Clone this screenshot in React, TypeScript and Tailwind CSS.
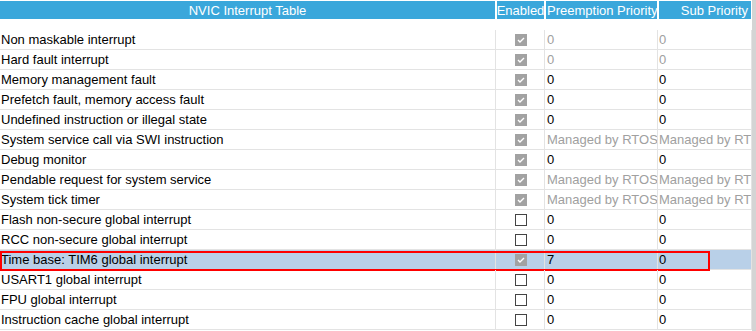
type Row = {
  name: string;
  enabled: boolean;
  pre: string;
  sub: string;
  dim?: boolean;
  selected?: boolean;
};

const rows: Row[] = [
  { name: "Non maskable interrupt", enabled: true, pre: "0", sub: "0", dim: true },
  { name: "Hard fault interrupt", enabled: true, pre: "0", sub: "0", dim: true },
  { name: "Memory management fault", enabled: true, pre: "0", sub: "0" },
  { name: "Prefetch fault, memory access fault", enabled: true, pre: "0", sub: "0" },
  { name: "Undefined instruction or illegal state", enabled: true, pre: "0", sub: "0" },
  { name: "System service call via SWI instruction", enabled: true, pre: "Managed by RTOS", sub: "Managed by RTOS", dim: true },
  { name: "Debug monitor", enabled: true, pre: "0", sub: "0" },
  { name: "Pendable request for system service", enabled: true, pre: "Managed by RTOS", sub: "Managed by RTOS", dim: true },
  { name: "System tick timer", enabled: true, pre: "Managed by RTOS", sub: "Managed by RTOS", dim: true },
  { name: "Flash non-secure global interrupt", enabled: false, pre: "0", sub: "0" },
  { name: "RCC non-secure global interrupt", enabled: false, pre: "0", sub: "0" },
  { name: "Time base: TIM6 global interrupt", enabled: true, pre: "7", sub: "0", selected: true },
  { name: "USART1 global interrupt", enabled: false, pre: "0", sub: "0" },
  { name: "FPU global interrupt", enabled: false, pre: "0", sub: "0" },
  { name: "Instruction cache global interrupt", enabled: false, pre: "0", sub: "0" },
];

function Check({ on }: { on: boolean }) {
  if (!on) {
    return <div className="h-[12px] w-[12px] border border-[#444] bg-white" />;
  }
  return (
    <div className="flex h-[12px] w-[12px] items-center justify-center bg-[#a2a2a2]">
      <svg width="10" height="10" viewBox="0 0 10 10">
        <polyline points="2,5 4,7 8,3" fill="none" stroke="#fff" strokeWidth="1.4" />
      </svg>
    </div>
  );
}

export default function App() {
  return (
    <div className="flex h-[331px] w-[756px] bg-white font-['Liberation_Sans',Arial,sans-serif] text-[13px] leading-none text-black">
      <div className="w-[752px]">
        {/* header */}
        <div className="flex h-[19px] pt-[1px] whitespace-nowrap text-white">
          <div className="w-[496px] pr-[1px]">
            <div className="flex h-full items-center justify-center bg-[#3aa7db]">NVIC Interrupt Table</div>
          </div>
          <div className="w-[49px] px-[1px]">
            <div className="flex h-full items-center justify-center bg-[#3aa7db]">Enabled</div>
          </div>
          <div className="w-[113px] px-[1px]">
            <div className="flex h-full items-center overflow-hidden bg-[#3aa7db] pl-[1px]">Preemption Priority</div>
          </div>
          <div className="w-[94px] px-[1px]">
            <div className="flex h-full items-center justify-end bg-[#3aa7db] pr-[3px]">Sub Priority</div>
          </div>
        </div>
        <div className="h-[11px]" />
        {rows.map((r) => (
          <div
            key={r.name}
            className={`relative flex h-[20px] border-b border-[#e3e3e3] ${r.selected ? "bg-[#b9d0e8]" : ""}`}
          >
            <div className="flex w-[496px] items-center border-r border-[#e3e3e3] pl-[1px]">{r.name}</div>
            <div className="flex w-[49px] items-center justify-center border-r border-[#e3e3e3] pl-[1px]">
              <Check on={r.enabled} />
            </div>
            <div
              className={`flex w-[113px] items-center overflow-hidden whitespace-nowrap border-r border-[#e3e3e3] pl-[2px] ${r.dim ? "text-[#a0a0a0]" : ""}`}
            >
              {r.pre}
            </div>
            <div
              className={`flex w-[94px] items-center overflow-hidden whitespace-nowrap border-r border-[#e3e3e3] pl-[1px] ${r.dim ? "text-[#a0a0a0]" : ""}`}
            >
              {r.sub}
            </div>
            {r.selected && (
              <div className="pointer-events-none absolute left-0 top-[1px] h-[20px] w-[710px] border-2 border-[#ff0000]" />
            )}
          </div>
        ))}
      </div>
      <div className="w-[4px] bg-[#d4d4d4]" />
    </div>
  );
}
